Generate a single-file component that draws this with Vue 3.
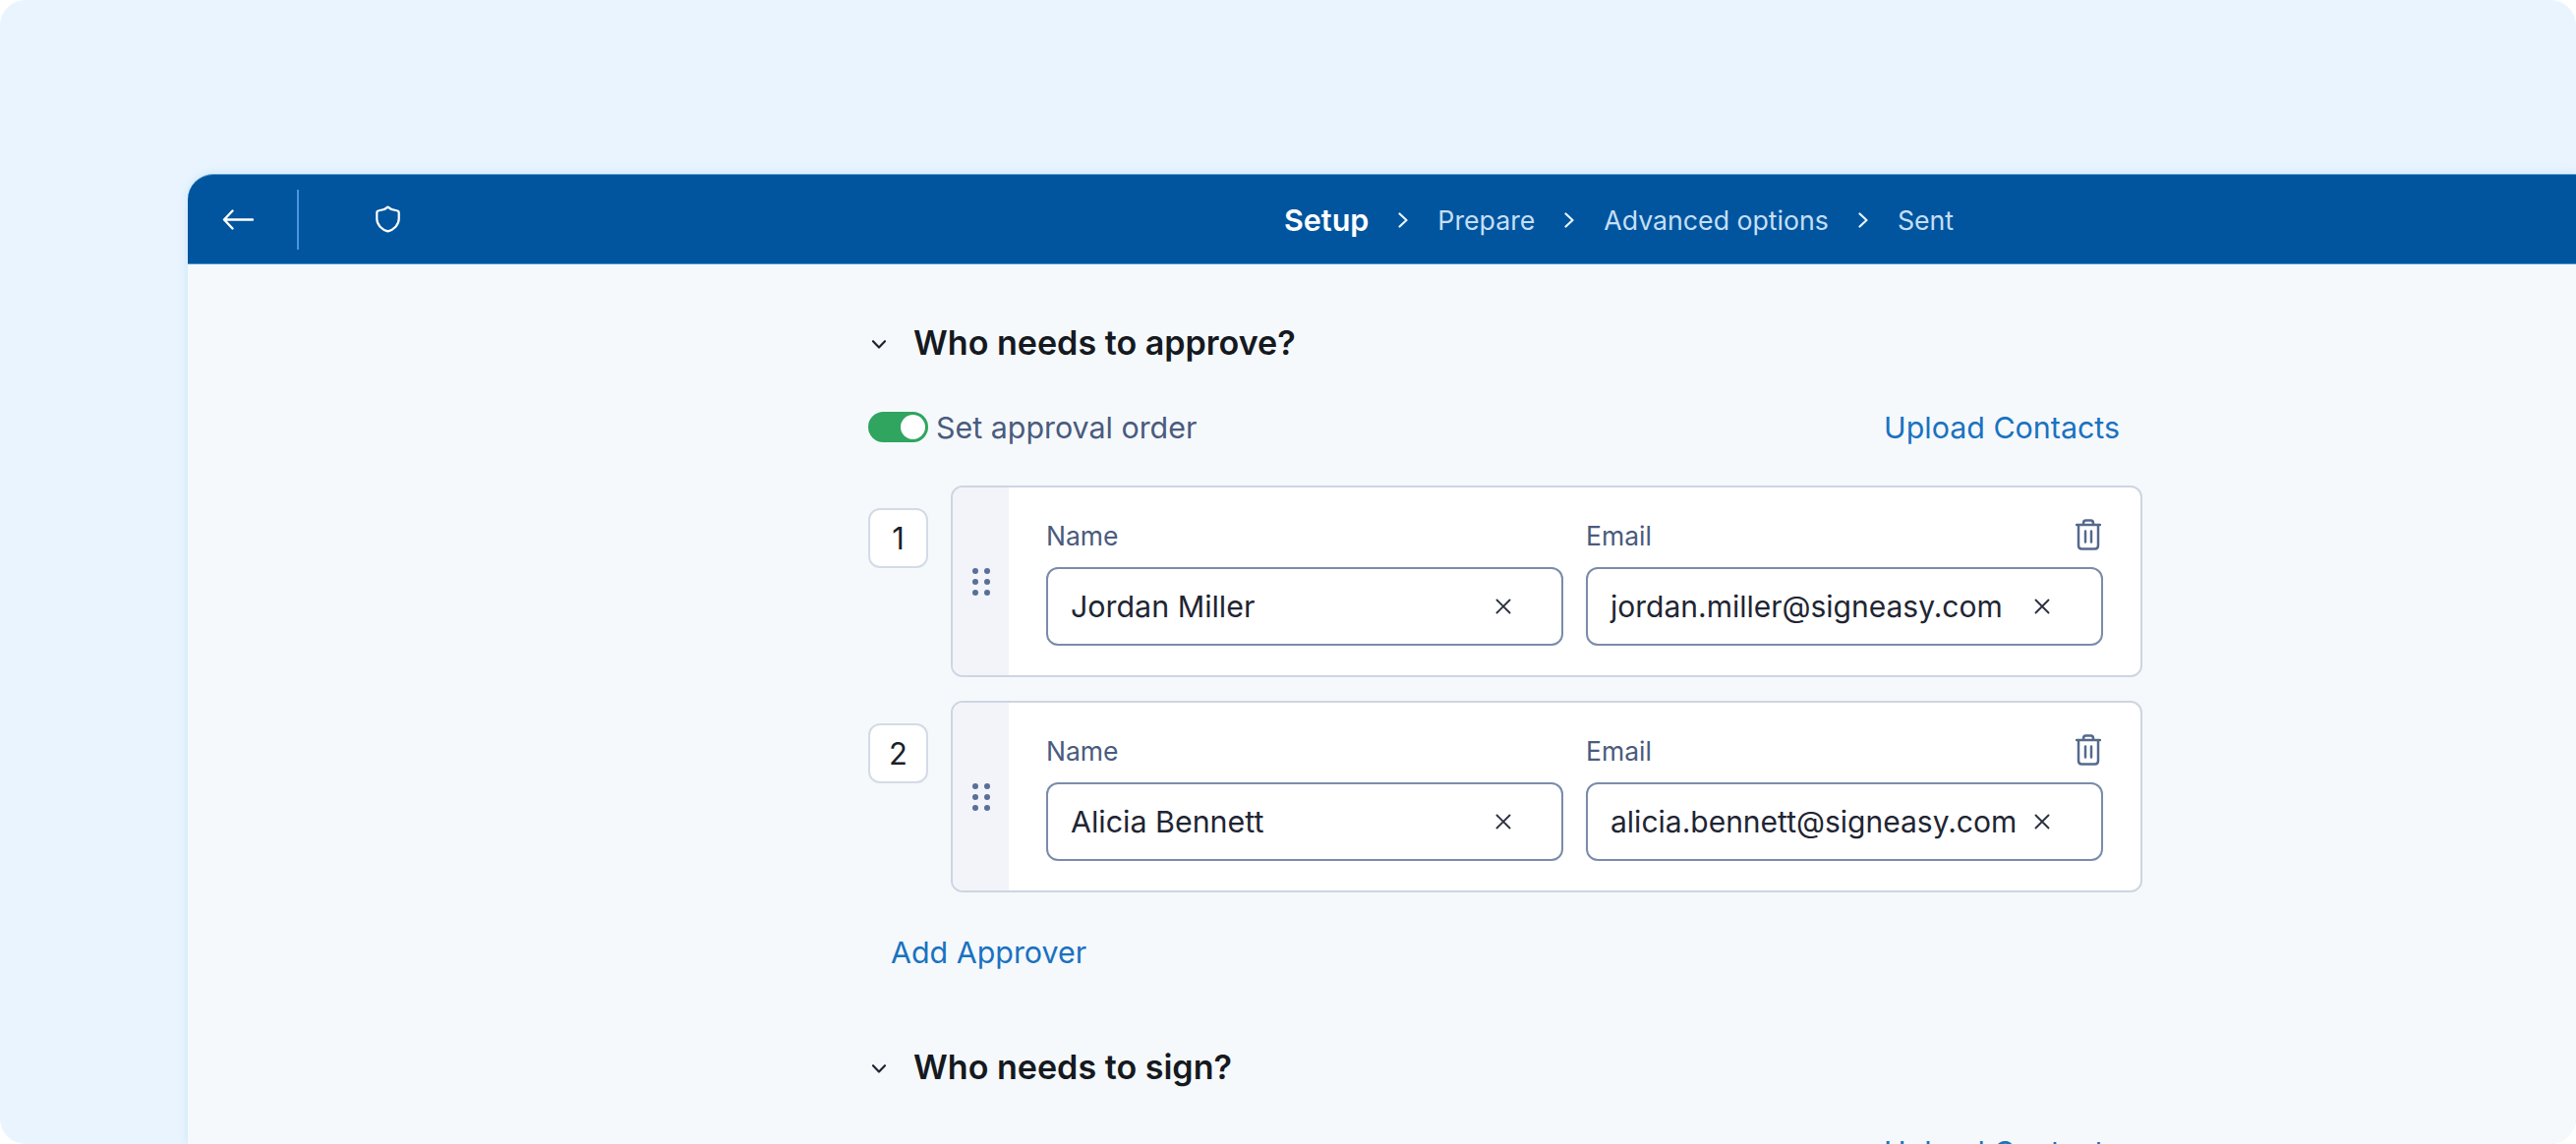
<script setup>
const steps = [
  { label: 'Setup', active: true },
  { label: 'Prepare' },
  { label: 'Advanced options' },
  { label: 'Sent' }
]
const approvers = [
  { n: 1, name: 'Jordan Miller', email: 'jordan.miller@signeasy.com' },
  { n: 2, name: 'Alicia Bennett', email: 'alicia.bennett@signeasy.com' }
]
const dots = 6
</script>

<template>
  <div class="frame">
    <div class="window">
      <header class="bar">
        <svg class="arrow" viewBox="0 0 32 21" fill="none">
          <path d="M31 10.500H2M10.500 1.500 2 10.500l8.500 9" />
        </svg>
        <span class="divider"></span>
        <svg class="shield" viewBox="0 0 27 28" fill="none">
          <path d="M13.5 1.6c2 2 4.5 3 8 3.4 1.7.2 3.2.5 3.2 2.2v6.6c0 6-5 10.700-11.200 12.600C7.300 24.500 2.300 19.800 2.300 13.800V7.200C2.300 5.500 3.800 5.200 5.500 5c3.500-.4 6-1.400 8-3.400z" />
        </svg>
        <nav class="crumbs">
          <template v-for="(s, i) in steps" :key="s.label">
            <svg v-if="i" class="crumb-chev" viewBox="0 0 10 16" fill="none">
              <path d="M1.500 1.500 8.500 8l-7 6.500" />
            </svg>
            <span class="crumb" :class="{ active: s.active }">{{ s.label }}</span>
          </template>
        </nav>
      </header>

      <main class="content">
        <section class="column">
          <div class="head">
            <svg class="chev" viewBox="0 0 14 9" fill="none"><path d="M1 1.200 7 7.500l6-6.300" /></svg>
            <h2>Who needs to approve?</h2>
          </div>
          <div class="order">
            <span class="toggle"><span class="knob"></span></span>
            <span class="order-label">Set approval order</span>
            <a class="link upload">Upload Contacts</a>
          </div>

          <div v-for="a in approvers" :key="a.n" class="row">
            <div class="num">{{ a.n }}</div>
            <div class="card">
              <div class="strip">
                <div class="grip"><i v-for="d in dots" :key="d"></i></div>
              </div>
              <div class="fields">
                <div class="field name">
                  <div class="label-row"><label>Name</label></div>
                  <div class="input">
                    <span class="value">{{ a.name }}</span>
                    <svg class="clear" viewBox="0 0 16 16" fill="none"><path d="M1.500 1.500l13 13M14.500 1.500l-13 13" /></svg>
                  </div>
                </div>
                <div class="field email">
                  <div class="label-row">
                    <label>Email</label>
                    <svg class="trash" viewBox="0 0 26 32" fill="none">
                      <path d="M1 6h24M8 6V4.300C8 2.900 8.900 1.500 10.500 1.500h5C17.100 1.500 18 2.900 18 4.300V6M3 6v21c0 2 1.300 3.500 3.300 3.500h13.400c2 0 3.300-1.500 3.300-3.500V6M10 12.500v11M16 12.500v11" />
                    </svg>
                  </div>
                  <div class="input">
                    <span class="value">{{ a.email }}</span>
                    <svg class="clear" viewBox="0 0 16 16" fill="none"><path d="M1.500 1.500l13 13M14.500 1.500l-13 13" /></svg>
                  </div>
                </div>
              </div>
            </div>
          </div>

          <a class="link add">Add Approver</a>

          <div class="head second">
            <svg class="chev" viewBox="0 0 14 9" fill="none"><path d="M1 1.200 7 7.500l6-6.300" /></svg>
            <h2>Who needs to sign?</h2>
          </div>
          <div class="order peek">
            <a class="link upload">Upload Contacts</a>
          </div>
        </section>
      </main>
    </div>
  </div>
</template>

<style scoped>
.frame {
  width: 2620px;
  height: 1164px;
  box-sizing: border-box;
  padding: 177px 0 0 191px;
  background: #e9f4fe;
  border-radius: 26px;
  overflow: hidden;
  font-family: Inter, "Liberation Sans", sans-serif;
}
.window {
  height: 987px;
  background: #f5f9fc;
  border-top-left-radius: 26px;
  box-shadow: 0 0 10px rgba(110, 200, 225, 0.28);
}
.bar {
  height: 92px;
  box-sizing: border-box;
  display: flex;
  align-items: center;
  background: #01559e;
  border-top: 1px solid #4f93cf;
  border-bottom: 1px solid #4f93cf;
  border-top-left-radius: 26px;
}
.arrow {
  width: 32px;
  height: 21px;
  margin-left: 35px;
}
.arrow path {
  stroke: #fff;
  stroke-width: 2.400;
  stroke-linecap: round;
  stroke-linejoin: round;
}
.divider {
  width: 2px;
  height: 61px;
  margin-left: 44px;
  background: #4a95e6;
}
.shield {
  width: 27px;
  height: 28px;
  margin-left: 77px;
}
.shield path {
  stroke: #fff;
  stroke-width: 2.200;
  stroke-linejoin: round;
}
.crumbs {
  display: flex;
  align-items: center;
  margin-left: 898px;
  padding-top: 1px;
  gap: 30px;
}
.crumb {
  font-size: 26.700px;
  line-height: 36px;
  color: #c5dff6;
}
.crumb.active {
  font-size: 30.500px;
  font-weight: 600;
  color: #fff;
}
.crumb-chev {
  width: 10px;
  height: 16px;
}
.crumb-chev path {
  stroke: #eaf4fc;
  stroke-width: 2.200;
  stroke-linecap: round;
  stroke-linejoin: round;
}
.content {
  padding: 58px 0 0 692px;
}
.column {
  width: 1296px;
}
.head {
  display: flex;
  align-items: center;
  height: 44px;
  padding-left: 4px;
  gap: 28px;
}
.head.second {
  margin-top: 75px;
}
.chev {
  width: 14px;
  height: 9px;
  margin-top: 3px;
}
.chev path {
  stroke: #1e2430;
  stroke-width: 2.200;
  stroke-linecap: round;
  stroke-linejoin: round;
}
h2 {
  margin: 0;
  font-size: 34.100px;
  font-weight: 600;
  line-height: 44px;
  color: #16191f;
}
.order {
  display: flex;
  align-items: center;
  height: 31px;
  margin-top: 48px;
  margin-bottom: 44px;
  padding-right: 23px;
}
.order.peek {
  justify-content: flex-end;
}
.toggle {
  display: flex;
  align-items: center;
  justify-content: flex-end;
  width: 61px;
  height: 31px;
  box-sizing: border-box;
  padding-right: 3px;
  border-radius: 16px;
  background: #2fa55f;
}
.knob {
  width: 25px;
  height: 25px;
  border-radius: 50%;
  background: #fff;
}
.order-label {
  margin-left: 8px;
  font-size: 30.400px;
  line-height: 40px;
  color: #4a5b7d;
}
.link {
  font-size: 30.400px;
  line-height: 40px;
  color: #1a72bf;
}
.upload {
  margin-left: auto;
}
.row {
  display: flex;
  align-items: flex-start;
  gap: 23px;
  margin-bottom: 24px;
}
.num {
  display: flex;
  align-items: center;
  justify-content: center;
  width: 61px;
  height: 61px;
  box-sizing: border-box;
  margin-top: 23px;
  border: 2px solid #d4dbe6;
  border-radius: 12px;
  background: #fff;
  font-size: 31px;
  color: #1a1f2b;
}
.card {
  flex: 1;
  display: flex;
  height: 195px;
  box-sizing: border-box;
  border: 2px solid #ced5e2;
  border-radius: 12px;
  background: #fff;
  overflow: hidden;
}
.strip {
  width: 57px;
  display: flex;
  justify-content: center;
  background: #f2f4f9;
}
.grip {
  display: grid;
  grid-template-columns: 6px 6px;
  grid-auto-rows: 6px;
  gap: 5px 6px;
  align-content: start;
  margin-top: 82px;
}
.grip i {
  border-radius: 50%;
  background: #5a6f96;
}
.fields {
  flex: 1;
  display: flex;
  gap: 23px;
  padding: 32px 38px 0 38px;
}
.field.name {
  width: 526px;
}
.field.email {
  width: 526px;
}
.label-row {
  display: flex;
  align-items: center;
  justify-content: space-between;
  height: 32px;
  margin-bottom: 17px;
}
label {
  padding-top: 2px;
  font-size: 26.500px;
  line-height: 32px;
  color: #4a5b7d;
}
.trash {
  width: 26px;
  height: 32px;
  margin-right: 2px;
}
.trash path {
  stroke: #55698d;
  stroke-width: 2.500;
  stroke-linecap: round;
  stroke-linejoin: round;
}
.input {
  display: flex;
  align-items: center;
  justify-content: space-between;
  height: 80px;
  box-sizing: border-box;
  padding: 0 52px 0 23px;
  border: 2px solid #7a8caa;
  border-radius: 12px;
  background: #fff;
}
.name .input {
  padding-right: 51px;
}
.value {
  font-size: 30px;
  line-height: 40px;
  color: #1f2533;
  white-space: nowrap;
}
.name .value {
  font-size: 30.400px;
}
.clear {
  width: 16px;
  height: 16px;
  flex: none;
}
.clear path {
  stroke: #2a3140;
  stroke-width: 1.900;
  stroke-linecap: round;
}
.add {
  display: block;
  margin-top: 41px;
  margin-left: 23px;
}
</style>

<style>
html, body {
  margin: 0;
  background: #fff;
}
</style>
